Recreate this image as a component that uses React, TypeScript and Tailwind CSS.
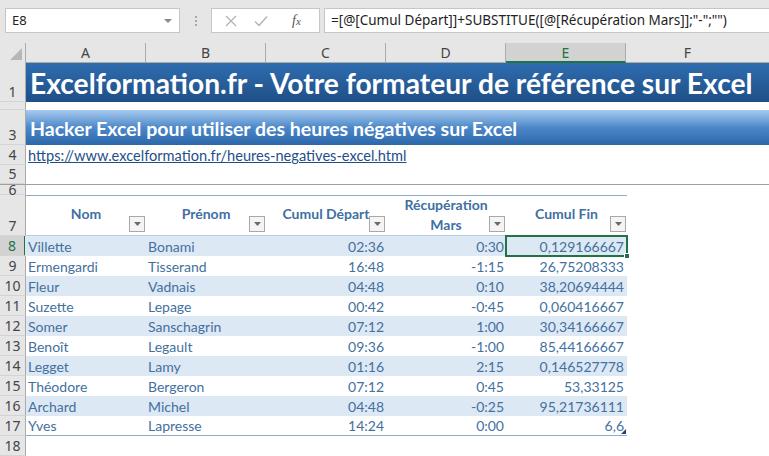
import React from "react"

const rows = [
  ["Villette", "Bonami", "02:36", "0:30", "0,129166667"],
  ["Ermengardi", "Tisserand", "16:48", "-1:15", "26,75208333"],
  ["Fleur", "Vadnais", "04:48", "0:10", "38,20694444"],
  ["Suzette", "Lepage", "00:42", "-0:45", "0,060416667"],
  ["Somer", "Sanschagrin", "07:12", "1:00", "30,34166667"],
  ["Benoît", "Legault", "09:36", "-1:00", "85,44166667"],
  ["Legget", "Lamy", "01:16", "2:15", "0,146527778"],
  ["Théodore", "Bergeron", "07:12", "0:45", "53,33125"],
  ["Archard", "Michel", "04:48", "-0:25", "95,21736111"],
  ["Yves", "Lapresse", "14:24", "0:00", "6,6"],
]

const ui = { fontFamily: '"Noto Sans", "Open Sans", sans-serif' }
const sheet = { fontFamily: 'Lato, "Open Sans", sans-serif' }

const RowHead = ({ n, active }: { n?: number; active?: boolean }) => (
  <div
    className={`w-[26px] shrink-0 flex items-end justify-center border-b border-[#d4d4d4] text-[14px] leading-[18px] ${
      active ? "bg-[#d2d2d2] text-[#217346] border-r-2 border-r-[#217346]" : "bg-[#e6e6e6] text-[#444] border-r border-r-[#ababab]"
    }`}
    style={ui}
  >
    {n}
  </div>
)

const FilterBtn = () => (
  <span className="absolute right-[1px] bottom-[3px] w-[16px] h-[16px] bg-[#f4f4f4] border border-[#a9a9a9] flex items-center justify-center">
    <svg width="7" height="4" viewBox="0 0 7 4">
      <path d="M0 0h7L3.5 4z" fill="#6a6a6a" />
    </svg>
  </span>
)

export default function App() {
  return (
    <div className="w-[769px] h-[456px] overflow-hidden bg-white" style={sheet}>
      {/* formula bar */}
      <div className="h-[43px] bg-[#e6e6e6] flex items-start pt-[8px] pl-[5px]" style={ui}>
        <div className="w-[175px] h-[25px] bg-white border border-[#c6c6c6] flex items-center justify-between pl-[6px] pr-[7px] text-[13px] text-[#222]">
          <span>E8</span>
          <svg width="8" height="4" viewBox="0 0 8 4">
            <path d="M0 0h8L4 4z" fill="#8a8a8a" />
          </svg>
        </div>
        <div className="w-[31px] h-[25px] flex flex-col items-center justify-center gap-[2px]">
          <span className="w-[2px] h-[2px] bg-[#a8a8a8]" />
          <span className="w-[2px] h-[2px] bg-[#a8a8a8]" />
          <span className="w-[2px] h-[2px] bg-[#a8a8a8]" />
        </div>
        <div className="w-[109px] h-[25px] bg-white border border-[#c6c6c6] flex items-center pl-[13px] gap-[17px]">
          <svg width="12" height="12" viewBox="0 0 12 12">
            <path d="M1 1l10 10M11 1L1 11" stroke="#b3b3b3" strokeWidth="1.3" />
          </svg>
          <svg width="14" height="12" viewBox="0 0 14 12">
            <path d="M1 6.5l4 4L13 1.5" stroke="#b3b3b3" strokeWidth="1.4" fill="none" />
          </svg>
          <span className="italic text-[14px] text-[#555] ml-[7px]" style={{ fontFamily: '"Liberation Serif", serif' }}>
            f<span className="text-[11px]">x</span>
          </span>
        </div>
        <div className="ml-[4px] flex-1 h-[25px] bg-white border border-[#c6c6c6] border-r-0 flex items-center pl-[6px] text-[13.5px] text-[#222] whitespace-nowrap">
          =[@[Cumul Départ]]+SUBSTITUE([@[Récupération Mars]];"-";"")
        </div>
      </div>

      {/* column headers */}
      <div className="h-[20px] flex bg-[#e6e6e6] text-[14px] text-[#444]" style={ui}>
        <div className="w-[26px] border-r border-[#ababab] flex items-end justify-end pr-[3px] pb-[3px]">
          <svg width="12" height="12" viewBox="0 0 12 12">
            <path d="M12 0v12H0z" fill="#b7b7b7" />
          </svg>
        </div>
        {["A", "B", "C", "D"].map((c) => (
          <div key={c} className="w-[120px] border-r border-[#ababab] border-b border-b-[#ababab] flex items-center justify-center">
            {c}
          </div>
        ))}
        <div className="w-[120px] border-r border-[#ababab] bg-[#d2d2d2] border-b-2 border-b-[#217346] text-[#217346] flex items-center justify-center">
          E
        </div>
        <div className="flex-1 border-b border-[#ababab] flex items-center justify-center pr-[20px]">F</div>
      </div>

      {/* row 1 */}
      <div className="h-[39px] flex">
        <RowHead n={1} />
        <div className="flex-1 bg-gradient-to-b from-[#2f6db0] to-[#1f4f86] flex items-end pl-[4px] pb-[2px] text-white font-bold text-[28.2px] leading-[34px] whitespace-nowrap">
          Excelformation.fr - Votre formateur de référence sur Excel
        </div>
      </div>
      {/* row 2 */}
      <div className="h-[8px] flex">
        <RowHead />
        <div className="flex-1" />
      </div>
      {/* row 3 */}
      <div className="h-[35px] flex">
        <RowHead n={3} />
        <div className="flex-1 bg-gradient-to-b from-[#a8cbee] via-[#4c88c9] to-[#2c67aa] flex items-end pl-[4px] pb-[5px] text-white font-bold text-[19.5px] leading-[23px] whitespace-nowrap">
          Hacker Excel pour utiliser des heures négatives sur Excel
        </div>
      </div>
      {/* row 4 */}
      <div className="h-[20px] flex">
        <RowHead n={4} />
        <div className="flex-1 flex items-end pl-[2px] text-[14.6px] leading-[19px] text-[#1f4f87] underline">
          https://www.excelformation.fr/heures-negatives-excel.html
        </div>
      </div>
      {/* row 5 */}
      <div className="h-[20px] flex border-b border-[#a0a0a0]">
        <RowHead n={5} />
        <div className="flex-1" />
      </div>
      {/* row 6 */}
      <div className="h-[10px] flex overflow-hidden">
        <div className="w-[26px] shrink-0 bg-[#e6e6e6] border-r border-[#ababab] border-b border-b-[#d4d4d4] text-[14px] leading-[10px] text-[#444] text-center" style={ui}>
          6
        </div>
        <div className="flex-1" />
      </div>
      {/* row 7 header */}
      <div className="h-[41px] flex">
        <RowHead n={7} />
        <div className="flex border-t border-[#8eaacb] border-b border-b-[#b8cce4] text-[#3f6fa3] font-bold text-[14px] leading-[20px]">
          {["Nom", "Prénom", "Cumul Départ"].map((h) => (
            <div key={h} className="relative w-[120px] flex items-center justify-center pb-[3px]">
              {h}
              <FilterBtn />
            </div>
          ))}
          <div className="relative w-[120px] flex flex-col items-center justify-center pb-[1px]">
            <span>Récupération</span>
            <span>Mars</span>
            <FilterBtn />
          </div>
          <div className="relative w-[121px] flex items-center justify-center pb-[3px]">
            Cumul Fin
            <FilterBtn />
          </div>
        </div>
      </div>

      {/* data rows */}
      {rows.map((r, i) => (
        <div key={i} className="h-[20px] flex">
          <RowHead n={8 + i} active={i === 0} />
          <div
            className={`flex text-[14px] leading-[19px] text-[#44709e] ${i % 2 === 0 ? "bg-[#dde8f5]" : "bg-white"} ${
              i === rows.length - 1 ? "border-b border-[#8eaacb]" : ""
            } ${i === 0 ? "-ml-[1px]" : ""}`}
          >
            <div className={`${i === 0 ? "w-[121px] pl-[3px]" : "w-[120px] pl-[2px]"} flex items-end`}>{r[0]}</div>
            <div className="w-[120px] flex items-end pl-[2px]">{r[1]}</div>
            <div className="w-[120px] flex items-end justify-end pr-[2px]">{r[2]}</div>
            <div className="w-[120px] flex items-end justify-end pr-[2px]">{r[3]}</div>
            <div className="relative w-[121px] flex items-end justify-end pr-[3px]">
              {r[4]}
              {i === 0 && (
                <>
                  <span className="absolute -top-[1px] -left-[1px] right-[-1px] -bottom-[1px] border-2 border-[#217346]" />
                  <span className="absolute -right-[3px] -bottom-[3px] w-[6px] h-[6px] bg-[#217346] border border-white" />
                </>
              )}
              {i === rows.length - 1 && (
                <svg className="absolute right-[1px] bottom-[1px]" width="5" height="5" viewBox="0 0 5 5">
                  <path d="M5 0v5H0z" fill="#26466d" />
                </svg>
              )}
            </div>
          </div>
        </div>
      ))}
      {/* row 18 */}
      <div className="h-[20px] flex">
        <RowHead n={18} />
        <div className="flex-1" />
      </div>
    </div>
  )
}
